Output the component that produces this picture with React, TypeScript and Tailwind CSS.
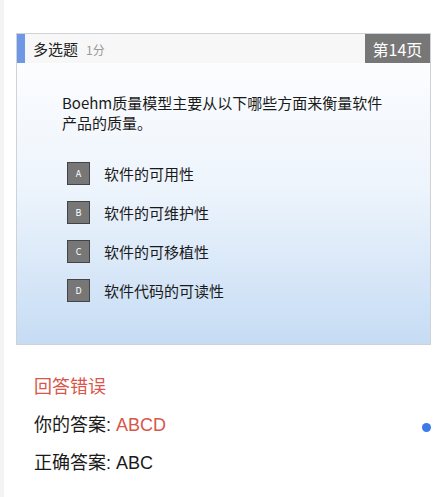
import React from "react";

const font = { fontFamily: '"Noto Sans CJK SC", "Noto Sans", sans-serif' };
const font2 = { fontFamily: '"Liberation Sans", "Noto Sans CJK SC", sans-serif' };

const options = [
  { k: "A", t: "软件的可用性" },
  { k: "B", t: "软件的可维护性" },
  { k: "C", t: "软件的可移植性" },
  { k: "D", t: "软件代码的可读性" },
];

export default function App() {
  return (
    <div className="relative flex h-[497px] w-[435px] overflow-hidden bg-white" style={font}>
      <div className="w-[4px] shrink-0 bg-[#f3f3f3]" />
      <div className="flex flex-1 flex-col">
        <div className="ml-[12px] mr-[4px] mt-[33px] h-[312px] border border-[#cfd3d8] bg-gradient-to-b from-white via-[#edf4fc] to-[#c6dcf4]">
          <div className="flex h-[29px] items-stretch bg-[#f7f7f7]">
            <div className="w-[8px] bg-[#6f97e6]" />
            <div className="flex flex-1 items-center pl-[8px]">
              <span className="text-[15px] leading-none text-[#222]">多选题</span>
              <span className="ml-[8px] mt-[3px] text-[12px] leading-none text-[#999]">1分</span>
            </div>
            <div className="flex w-[65px] items-center justify-center bg-[#777777] text-[16px] leading-none text-white">
              第14页
            </div>
          </div>
          <div className="pl-[45px] pr-[30px] pt-[30px] text-[15px] leading-[20px] text-[#1a1a1a]">
            Boehm质量模型主要从以下哪些方面来衡量软件
            <br />
            产品的质量。
          </div>
          <div className="mt-[29px] flex flex-col gap-[16px] pl-[50px]">
            {options.map((o) => (
              <div key={o.k} className="flex items-center">
                <div className="flex h-[23px] w-[23px] items-center justify-center border border-[#444] bg-[#777777] text-[9px] leading-none text-white">
                  {o.k}
                </div>
                <span className="ml-[14px] text-[15px] leading-none text-[#1a1a1a]">{o.t}</span>
              </div>
            ))}
          </div>
        </div>
        <div style={font2}>
          <div className="mt-[32px] pl-[30px] text-[18px] leading-[20px] text-[#d9564a]">回答错误</div>
          <div className="mt-[18px] pl-[30px] text-[18px] leading-[20px] text-[#1a1a1a]">
            你的答案: <span className="text-[#d9564a]">ABCD</span>
          </div>
          <div className="mt-[18px] pl-[30px] text-[18px] leading-[20px] text-[#1a1a1a]">正确答案: ABC</div>
        </div>
      </div>
      <div className="absolute left-[422px] top-[423px] h-[9px] w-[9px] rounded-full bg-[#3b7be9]" />
    </div>
  );
}
